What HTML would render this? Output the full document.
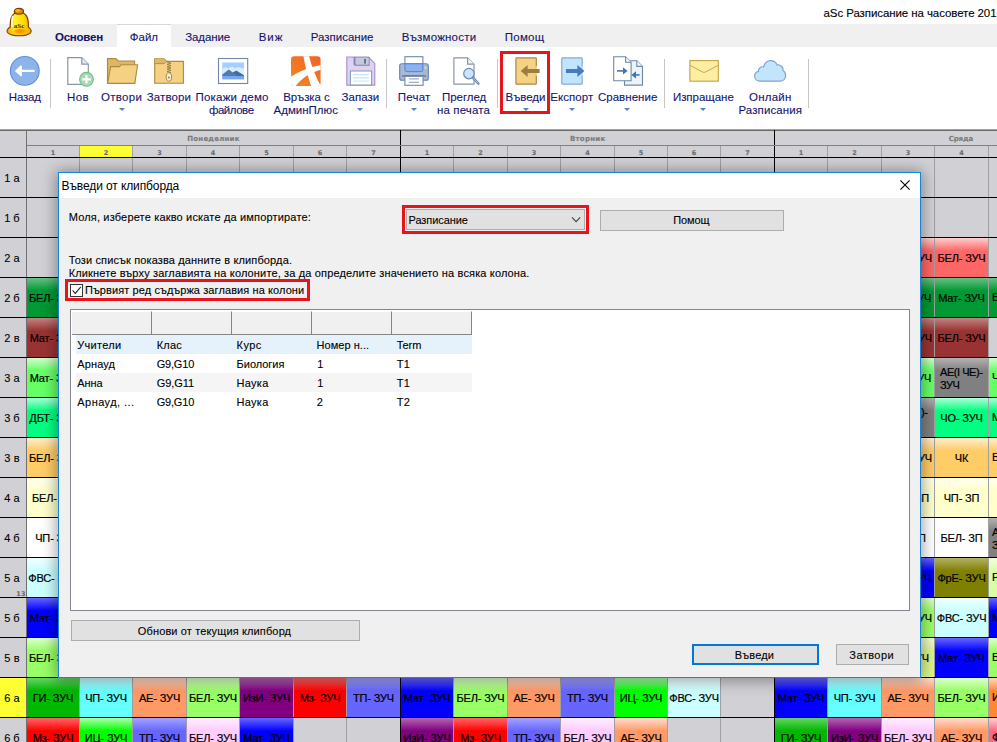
<!DOCTYPE html><html lang='bg'><head><meta charset='utf-8'><title>aSc Разписание на часовете</title><style>
html,body{margin:0;padding:0;}
body{width:997px;height:742px;overflow:hidden;background:#fff;position:relative;font-family:"Liberation Sans",sans-serif;}
.a{position:absolute;}
.t{position:absolute;white-space:nowrap;line-height:1;-webkit-text-stroke:0.1px currentColor;}
.c{-webkit-text-stroke:0.2px currentColor;}
.r{-webkit-text-stroke:0.1px currentColor;}
.cell{position:absolute;height:39px;}
.btn{position:absolute;background:#e1e1e1;border:1px solid #adadad;box-sizing:border-box;}
</style></head><body><div class='a' style='left:0;top:24px;width:997px;height:23px;background:#f0f0f0'></div><div class='a' style='left:117px;top:24px;width:54px;height:23px;background:#fff;border-top:1px solid #d6d6d6;box-sizing:border-box'></div><div class='t r' style='font-size:11.5px;color:#000;letter-spacing:-0.084px;left:823.50px;top:8.15px;'>aSc Разписание на часовете 201</div><div class='t r' style='font-size:11.5px;color:#15156c;font-weight:bold;letter-spacing:-0.240px;left:55.00px;top:32.15px;'>Основен</div><div class='t r' style='font-size:11.5px;color:#15156c;letter-spacing:0.030px;left:129.70px;top:32.15px;'>Файл</div><div class='t r' style='font-size:11.5px;color:#15156c;letter-spacing:-0.132px;left:185.30px;top:32.15px;'>Задание</div><div class='t r' style='font-size:11.5px;color:#15156c;letter-spacing:0.868px;left:258.80px;top:32.15px;'>Виж</div><div class='t r' style='font-size:11.5px;color:#15156c;letter-spacing:0.000px;left:310.70px;top:32.15px;'>Разписание</div><div class='t r' style='font-size:11.5px;color:#15156c;letter-spacing:0.210px;left:401.80px;top:32.15px;'>Възможности</div><div class='t r' style='font-size:11.5px;color:#15156c;letter-spacing:0.252px;left:504.80px;top:32.15px;'>Помощ</div><div class='t r' style='font-size:11.5px;color:#15156c;letter-spacing:-0.211px;left:8.80px;top:92.45px;'>Назад</div><div class='t r' style='font-size:11.5px;color:#15156c;letter-spacing:0.362px;left:67.00px;top:92.45px;'>Нов</div><div class='t r' style='font-size:11.5px;color:#15156c;letter-spacing:0.330px;left:100.90px;top:92.45px;'>Отвори</div><div class='t r' style='font-size:11.5px;color:#15156c;letter-spacing:0.134px;left:146.70px;top:92.45px;'>Затвори</div><div class='t r' style='font-size:11.5px;color:#15156c;letter-spacing:0.176px;left:195.60px;top:92.45px;'>Покажи демо</div><div class='t r' style='font-size:11.5px;color:#15156c;letter-spacing:-0.458px;left:208.90px;top:105.45px;'>файлове</div><div class='t r' style='font-size:11.5px;color:#15156c;letter-spacing:-0.095px;left:283.20px;top:92.45px;'>Връзка с</div><div class='t r' style='font-size:11.5px;color:#15156c;letter-spacing:-0.014px;left:273.60px;top:105.45px;'>АдминПлюс</div><div class='t r' style='font-size:11.5px;color:#15156c;letter-spacing:0.009px;left:341.60px;top:92.45px;'>Запази</div><div class='t r' style='font-size:11.5px;color:#15156c;letter-spacing:0.243px;left:397.70px;top:92.45px;'>Печат</div><div class='t r' style='font-size:11.5px;color:#15156c;letter-spacing:-0.023px;left:441.90px;top:92.45px;'>Преглед</div><div class='t r' style='font-size:11.5px;color:#15156c;letter-spacing:0.149px;left:436.90px;top:105.45px;'>на печата</div><div class='t r' style='font-size:11.5px;color:#15156c;letter-spacing:-0.071px;left:505.60px;top:92.45px;'>Въведи</div><div class='t r' style='font-size:11.5px;color:#15156c;letter-spacing:0.082px;left:550.20px;top:92.45px;'>Експорт</div><div class='t r' style='font-size:11.5px;color:#15156c;letter-spacing:0.042px;left:597.90px;top:92.45px;'>Сравнение</div><div class='t r' style='font-size:11.5px;color:#15156c;letter-spacing:-0.030px;left:672.90px;top:92.45px;'>Изпращане</div><div class='t r' style='font-size:11.5px;color:#15156c;letter-spacing:0.219px;left:749.10px;top:92.45px;'>Онлайн</div><div class='t r' style='font-size:11.5px;color:#15156c;letter-spacing:0.086px;left:738.50px;top:105.45px;'>Разписания</div><div class='a' style='left:50px;top:59px;width:1px;height:49px;background:#c6c6c6'></div><div class='a' style='left:386px;top:59px;width:1px;height:49px;background:#c6c6c6'></div><div class='a' style='left:497px;top:59px;width:1px;height:49px;background:#c6c6c6'></div><div class='a' style='left:664px;top:59px;width:1px;height:49px;background:#c6c6c6'></div><div class='a' style='left:808px;top:59px;width:1px;height:49px;background:#c6c6c6'></div><div class='a' style='left:118.6px;top:108px;width:0;height:0;border-left:3px solid transparent;border-right:3px solid transparent;border-top:3px solid #5a7fb8'></div><div class='a' style='left:357.3px;top:108px;width:0;height:0;border-left:3px solid transparent;border-right:3px solid transparent;border-top:3px solid #5a7fb8'></div><div class='a' style='left:411.2px;top:108px;width:0;height:0;border-left:3px solid transparent;border-right:3px solid transparent;border-top:3px solid #5a7fb8'></div><div class='a' style='left:522.6px;top:108px;width:0;height:0;border-left:3px solid transparent;border-right:3px solid transparent;border-top:3px solid #5a7fb8'></div><div class='a' style='left:568.5px;top:108px;width:0;height:0;border-left:3px solid transparent;border-right:3px solid transparent;border-top:3px solid #5a7fb8'></div><div class='a' style='left:624.4px;top:108px;width:0;height:0;border-left:3px solid transparent;border-right:3px solid transparent;border-top:3px solid #5a7fb8'></div><div class='a' style='left:700.0px;top:108px;width:0;height:0;border-left:3px solid transparent;border-right:3px solid transparent;border-top:3px solid #5a7fb8'></div><div class='a' style='left:500px;top:51px;width:50px;height:63px;border:3px solid #e8141c;box-sizing:border-box'></div><svg class='a' style='left:0;top:0' width='997' height='128' viewBox='0 0 997 128'>
<defs>
<linearGradient id='bellg' x1='0' y1='0' x2='1' y2='0'><stop offset='0' stop-color='#f0b000'/><stop offset='0.3' stop-color='#fff030'/><stop offset='0.65' stop-color='#ffe000'/><stop offset='1' stop-color='#f0a800'/></linearGradient>
<linearGradient id='bellv' x1='0' y1='0' x2='0' y2='1'><stop offset='0.5' stop-color='#ffe020' stop-opacity='0'/><stop offset='1' stop-color='#f09000' stop-opacity='0.45'/></linearGradient>
<linearGradient id='apg' x1='0' y1='1' x2='1' y2='0'><stop offset='0' stop-color='#f58820'/><stop offset='1' stop-color='#ee6428'/></linearGradient>
<clipPath id='apc'><rect x='291' y='56.2' width='29.6' height='29.7' rx='3.2'/></clipPath>
<radialGradient id='bello'><stop offset='0' stop-color='#ff8a00'/><stop offset='0.6' stop-color='#ff9a08' stop-opacity='0.9'/><stop offset='1' stop-color='#ffb010' stop-opacity='0'/></radialGradient>
</defs>
<!-- bell -->
<g>
<path d='M10.2 27 C10 17 12.4 12.4 19.2 12.4 C26 12.4 28.6 17 28.4 27 C29.4 28 30.6 29 31 30.4 C31.6 32.6 29.6 34 26.6 34.8 C22.6 35.8 15.8 35.8 11.8 34.8 C8.8 34 6.6 32.6 7.2 30.4 C7.6 29 9 28 10.2 27 Z' fill='url(#bellg)' stroke='#7a3c00' stroke-width='1.25'/>
<path d='M10.2 27 C10 17 12.4 12.4 19.2 12.4 C26 12.4 28.6 17 28.4 27 C29.4 28 30.6 29 31 30.4 C31.6 32.6 29.6 34 26.6 34.8 C22.6 35.8 15.8 35.8 11.8 34.8 C8.8 34 6.6 32.6 7.2 30.4 C7.6 29 9 28 10.2 27 Z' fill='url(#bellv)'/>
<path d='M12.6 16.5 C11.8 19.5 11.8 23.5 12 26.4' fill='none' stroke='#fffbe0' stroke-width='1.7' stroke-linecap='round' opacity='0.9'/>
<ellipse cx='20.2' cy='31.2' rx='7.6' ry='3.3' fill='url(#bello)'/>
<ellipse cx='18.9' cy='11.2' rx='4.6' ry='2.9' fill='#d88a08' stroke='#7a3c00' stroke-width='1.2'/>
<ellipse cx='17.8' cy='10.6' rx='2.4' ry='1.3' fill='#ffc030' opacity='0.8'/>
<text x='19' y='28' font-family='"Liberation Serif",serif' font-size='7' font-weight='bold' fill='#5a2800' text-anchor='middle'>aSc</text>
</g>
<!-- back -->
<circle cx='24.8' cy='70.9' r='14.4' fill='#8cb4ea' stroke='#5f8fd8' stroke-width='1.1'/>
<path d='M34.6 70.9 H18.5 M21.5 66.2 L16.6 70.9 L21.5 75.6' fill='none' stroke='#fff' stroke-width='2.3' stroke-linejoin='miter'/>
<path d='M15.6 70.9 L21.8 65.4 V76.4 Z' fill='#fff'/>
<!-- new -->
<path d='M67.8 57.7 H81.8 L88.3 64.2 V84.4 H67.8 Z' fill='#fff' stroke='#8796ad' stroke-width='1.2'/>
<path d='M81.8 57.7 V64.2 H88.3' fill='#e4e9f0' stroke='#8796ad' stroke-width='1.2'/>
<circle cx='86.5' cy='79.3' r='6.9' fill='#a8d9b4' stroke='#74bd88' stroke-width='1.1'/>
<path d='M86.5 75 V83.6 M82.2 79.3 H90.8' stroke='#fff' stroke-width='2.2'/>
<!-- open folder -->
<path d='M107.5 58.6 H115.8 L118.2 61 H134.6 V83.4 H107.5 Z' fill='#e0b662' stroke='#ae8942' stroke-width='1.1'/>
<path d='M110.6 66.6 H119.4 L121 64.8 H137.6 L134.8 83.4 H107.6 Z' fill='#f5d183' stroke='#ae8942' stroke-width='1.1'/>
<!-- zip folder -->
<path d='M154.7 58.7 H164 L166.6 61.4 H183.4 V83.2 H154.7 Z' fill='#f5d183' stroke='#ae8942' stroke-width='1.1'/>
<path d='M155.2 59.2 H163.8 L166.2 61.8 L164.4 63.6 H155.2 Z' fill='#e0b662'/><path d='M154.7 63.6 H164.4 L166.6 61.4' fill='none' stroke='#ae8942' stroke-width='0.9'/>
<path d='M167 62 L171 63.2 L167 64.4 L171 65.6 L167 66.8 L171 68 L167 69.2 L171 70.4 L167 71.6 L171 72.6' fill='none' stroke='#8a7040' stroke-width='0.8'/>
<ellipse cx='168.9' cy='77' rx='2.7' ry='4.2' fill='#f6eed6' stroke='#9a8048' stroke-width='0.9'/>
<circle cx='168.9' cy='77.6' r='1' fill='#9a8048'/>
<!-- picture -->
<rect x='218.5' y='58.5' width='29.2' height='25' fill='#fff' stroke='#7088a8' stroke-width='1.1'/>
<rect x='222.3' y='62.5' width='21.7' height='16.8' fill='#a6cfff'/>
<path d='M222.3 69.5 C224 67.4 226.5 67 228.4 68.6 C230 66.6 233.4 66.6 235 68.4 C237 66.6 240.6 66.8 242 68.6 L244 68.2 V76 H222.3 Z' fill='#d6efff'/>
<path d='M222.3 74.4 L228.8 69.6 L232.8 72.6 L236.4 70.8 L244 75.6 V76.4 H222.3 Z' fill='#5379b3'/>
<path d='M232.8 72.6 L236.4 70.8 L244 75.6 V76.4 H238 Z' fill='#456a9f'/>
<rect x='222.3' y='76.2' width='21.7' height='3.1' fill='#79a8f2'/>
<!-- adminplus -->
<rect x='291' y='56.2' width='29.6' height='29.7' rx='3.2' fill='url(#apg)'/>
<g clip-path='url(#apc)'>
<path d='M303.2 55 C305 66 308 77 311.4 87 L321.4 87 C315.6 77 311.4 66 308.8 55 Z' fill='#fff'/>
<path d='M290 77.2 C300 70.6 310.6 66.6 321.6 64.8 L321.6 69.6 C311.6 72 302.6 77 294.6 87 L290 87 Z' fill='#fff'/>
</g>
<!-- floppy -->
<path d='M346.8 57 H368.4 L374.8 63.4 V85.1 H346.8 Z' fill='#dcd2f2' stroke='#a890cc' stroke-width='1.1'/>
<path d='M353.6 57 H369.6 V65.8 H355.2 Q353.6 65.8 353.6 64 Z' fill='#8c7cb0'/>
<rect x='355.4' y='57.4' width='13.4' height='7.4' rx='0.8' fill='#c2cadb'/>
<rect x='364' y='59' width='2' height='4.6' fill='#6a7290'/>
<rect x='350.4' y='71' width='21.2' height='14' fill='#fff' stroke='#8898b4' stroke-width='1'/>
<path d='M353 74.6 H369 M353 77.8 H369 M353 81 H369' stroke='#c6e4f9' stroke-width='1.2'/>
<!-- printer -->
<rect x='404.9' y='56.7' width='18' height='9' fill='#fff' stroke='#7088a8' stroke-width='1.1'/>
<rect x='399.7' y='63.8' width='28.6' height='16.4' rx='2' fill='#a9b9d2' stroke='#6482ac' stroke-width='1.1'/>
<path d='M404.9 63.8 H422.9 V69.8 Q422.9 71.6 421 71.6 H406.8 Q404.9 71.6 404.9 69.8 Z' fill='#8ab2f2' stroke='#5584d6' stroke-width='1'/>
<circle cx='425.6' cy='67.8' r='1.1' fill='#ffe060'/>
<path d='M402.4 77 Q402.4 75.6 404 75.6 H424 Q425.6 75.6 425.6 77' fill='none' stroke='#5f7aa2' stroke-width='1.3'/>
<rect x='404.9' y='76.3' width='18.2' height='9' fill='#fff' stroke='#7088a8' stroke-width='1.1'/>
<path d='M409 78.9 H419 M409 82.3 H419' stroke='#8a9ab6' stroke-width='1'/>
<!-- preview -->
<path d='M453.9 57.8 H467.6 L474 64.2 V84.2 H453.9 Z' fill='#fff' stroke='#8796ad' stroke-width='1.2'/>
<path d='M467.6 57.8 V64.2 H474' fill='#f2f5f9' stroke='#8796ad' stroke-width='1.2'/>
<path d='M472.6 77.4 L478.4 83.6' stroke='#7189ad' stroke-width='2.6' stroke-linecap='round'/>
<path d='M472.6 77.4 L478.2 83.4' stroke='#b8c8dc' stroke-width='0.9' stroke-linecap='round'/>
<circle cx='468.9' cy='73.6' r='5.2' fill='#c9e6fb' stroke='#6a8ab4' stroke-width='1.2'/>
<!-- import -->
<rect x='515.9' y='57.8' width='20.4' height='26.4' rx='0.8' fill='#f5d183' stroke='#a98a4c' stroke-width='1.2'/>
<rect x='535.5' y='66.2' width='1.5' height='9.6' fill='#f5d183'/>
<path d='M539.6 69.1 H527.6 V65 L520.8 71 L527.6 77 V72.9 H539.6 Z' fill='#9b7c42'/>
<!-- export -->
<rect x='561.8' y='57.8' width='20.4' height='26.4' rx='0.8' fill='#c1e5fd' stroke='#8aa9da' stroke-width='1.2'/>
<rect x='581.4' y='66.2' width='1.5' height='9.6' fill='#c1e5fd'/>
<path d='M566 69.1 H577.4 V65 L584.4 71 L577.4 77 V72.9 H566 Z' fill='#4a7abb'/>
<!-- compare -->
<path d='M624.5 60.7 H636.8 L642.5 66.4 V85.1 H624.5 Z' fill='#e9f4fc' stroke='#7088a8' stroke-width='1.1'/>
<path d='M636.8 60.7 V66.4 H642.5' fill='#f4f8fc' stroke='#7088a8' stroke-width='1.1'/>
<path d='M613.7 56.7 H625.6 L631.1 62.2 V80.8 H613.7 Z' fill='#fff' stroke='#7088a8' stroke-width='1.1'/>
<path d='M625.6 56.7 V62.2 H631.1' fill='#eef2f7' stroke='#7088a8' stroke-width='1.1'/>
<path d='M617 70.9 H624' fill='none' stroke='#4272ba' stroke-width='1.6'/><path d='M623 67.2 L627.6 70.9 L623 74.6 Z' fill='#4272ba'/>
<path d='M639.6 74.9 H635' fill='none' stroke='#4272ba' stroke-width='1.6'/><path d='M636 71.2 L631.4 74.9 L636 78.6 Z' fill='#4272ba'/>
<!-- envelope -->
<rect x='689.9' y='60.6' width='28.4' height='20.6' fill='#fdefa2' stroke='#c7a84c' stroke-width='1.2'/>
<path d='M690.2 65.4 L702.6 72 Q704.1 72.8 705.6 72 L718 65.4' fill='none' stroke='#c7a84c' stroke-width='1'/>
<!-- cloud -->
<path d='M760 81.2 C756.6 81.2 754.6 78.8 754.6 76.2 C754.6 73.8 756.2 72 758.4 71.4 C758.4 68.4 760.8 66.4 763.6 66.8 C764.6 63.4 767.2 60.6 770.6 60.6 C773.8 60.6 776.2 62.6 777.2 65 C780.6 64.4 783.4 67.2 783 70.6 C784.8 71.6 785.6 73.6 785.6 75.6 C785.6 78.8 783.4 81.2 780 81.2 Z' fill='#c1e5fd' stroke='#82a3d3' stroke-width='1.2'/>
</svg>
<div class='a' style='left:0;top:129px;width:997px;height:613px;background:#d0d0d5'></div><div class='a' style='left:0;top:129px;width:997px;height:2px;background:linear-gradient(#a4a4a4 50%,#6a6a6a 50%)'></div><div class='a' style='left:26px;top:130px;width:1px;height:612px;background:#707070'></div><div class='a' style='left:79px;top:146px;width:1px;height:596px;background:#a0a0a0'></div><div class='a' style='left:132px;top:146px;width:1px;height:596px;background:#a0a0a0'></div><div class='a' style='left:186px;top:146px;width:1px;height:596px;background:#a0a0a0'></div><div class='a' style='left:239px;top:146px;width:1px;height:596px;background:#a0a0a0'></div><div class='a' style='left:293px;top:146px;width:1px;height:596px;background:#a0a0a0'></div><div class='a' style='left:346px;top:146px;width:1px;height:596px;background:#a0a0a0'></div><div class='a' style='left:400px;top:130px;width:1px;height:612px;background:#000'></div><div class='a' style='left:453px;top:146px;width:1px;height:596px;background:#a0a0a0'></div><div class='a' style='left:507px;top:146px;width:1px;height:596px;background:#a0a0a0'></div><div class='a' style='left:560px;top:146px;width:1px;height:596px;background:#a0a0a0'></div><div class='a' style='left:614px;top:146px;width:1px;height:596px;background:#a0a0a0'></div><div class='a' style='left:667px;top:146px;width:1px;height:596px;background:#a0a0a0'></div><div class='a' style='left:720px;top:146px;width:1px;height:596px;background:#a0a0a0'></div><div class='a' style='left:774px;top:130px;width:1px;height:612px;background:#000'></div><div class='a' style='left:827px;top:146px;width:1px;height:596px;background:#a0a0a0'></div><div class='a' style='left:881px;top:146px;width:1px;height:596px;background:#a0a0a0'></div><div class='a' style='left:934px;top:146px;width:1px;height:596px;background:#a0a0a0'></div><div class='a' style='left:988px;top:146px;width:1px;height:596px;background:#a0a0a0'></div><div class='a' style='left:27px;top:145px;width:970px;height:1px;background:#808080'></div><div class='a' style='left:0;top:157px;width:997px;height:1px;background:#000'></div><div class='a' style='left:80px;top:146px;width:52px;height:11px;background:#ffff33'></div><div class='t ' style='font-size:7px;color:#7a7a7a;font-weight:bold;letter-spacing:0.202px;left:187.30px;top:136.09px;font-family:"DejaVu Sans",sans-serif;'>Понеделник</div><div class='t ' style='font-size:7px;color:#7a7a7a;font-weight:bold;letter-spacing:0.240px;left:570.00px;top:136.09px;font-family:"DejaVu Sans",sans-serif;'>Вторник</div><div class='t ' style='font-size:7px;color:#7a7a7a;font-weight:bold;letter-spacing:-0.146px;left:948.70px;top:136.09px;font-family:"DejaVu Sans",sans-serif;'>Сряда</div><div class='t ' style='font-size:6.5px;color:#6c6c6c;font-weight:bold;top:149.88px;left:43.0px;width:20px;text-align:center;font-family:"DejaVu Sans",sans-serif;'>1</div><div class='t ' style='font-size:6.5px;color:#6c6c6c;font-weight:bold;top:149.88px;left:96.0px;width:20px;text-align:center;font-family:"DejaVu Sans",sans-serif;'>2</div><div class='t ' style='font-size:6.5px;color:#6c6c6c;font-weight:bold;top:149.88px;left:149.5px;width:20px;text-align:center;font-family:"DejaVu Sans",sans-serif;'>3</div><div class='t ' style='font-size:6.5px;color:#6c6c6c;font-weight:bold;top:149.88px;left:203.0px;width:20px;text-align:center;font-family:"DejaVu Sans",sans-serif;'>4</div><div class='t ' style='font-size:6.5px;color:#6c6c6c;font-weight:bold;top:149.88px;left:256.5px;width:20px;text-align:center;font-family:"DejaVu Sans",sans-serif;'>5</div><div class='t ' style='font-size:6.5px;color:#6c6c6c;font-weight:bold;top:149.88px;left:310.0px;width:20px;text-align:center;font-family:"DejaVu Sans",sans-serif;'>6</div><div class='t ' style='font-size:6.5px;color:#6c6c6c;font-weight:bold;top:149.88px;left:363.5px;width:20px;text-align:center;font-family:"DejaVu Sans",sans-serif;'>7</div><div class='t ' style='font-size:6.5px;color:#6c6c6c;font-weight:bold;top:149.88px;left:417.0px;width:20px;text-align:center;font-family:"DejaVu Sans",sans-serif;'>1</div><div class='t ' style='font-size:6.5px;color:#6c6c6c;font-weight:bold;top:149.88px;left:470.5px;width:20px;text-align:center;font-family:"DejaVu Sans",sans-serif;'>2</div><div class='t ' style='font-size:6.5px;color:#6c6c6c;font-weight:bold;top:149.88px;left:524.0px;width:20px;text-align:center;font-family:"DejaVu Sans",sans-serif;'>3</div><div class='t ' style='font-size:6.5px;color:#6c6c6c;font-weight:bold;top:149.88px;left:577.5px;width:20px;text-align:center;font-family:"DejaVu Sans",sans-serif;'>4</div><div class='t ' style='font-size:6.5px;color:#6c6c6c;font-weight:bold;top:149.88px;left:631.0px;width:20px;text-align:center;font-family:"DejaVu Sans",sans-serif;'>5</div><div class='t ' style='font-size:6.5px;color:#6c6c6c;font-weight:bold;top:149.88px;left:684.0px;width:20px;text-align:center;font-family:"DejaVu Sans",sans-serif;'>6</div><div class='t ' style='font-size:6.5px;color:#6c6c6c;font-weight:bold;top:149.88px;left:737.5px;width:20px;text-align:center;font-family:"DejaVu Sans",sans-serif;'>7</div><div class='t ' style='font-size:6.5px;color:#6c6c6c;font-weight:bold;top:149.88px;left:791.0px;width:20px;text-align:center;font-family:"DejaVu Sans",sans-serif;'>1</div><div class='t ' style='font-size:6.5px;color:#6c6c6c;font-weight:bold;top:149.88px;left:844.5px;width:20px;text-align:center;font-family:"DejaVu Sans",sans-serif;'>2</div><div class='t ' style='font-size:6.5px;color:#6c6c6c;font-weight:bold;top:149.88px;left:898.0px;width:20px;text-align:center;font-family:"DejaVu Sans",sans-serif;'>3</div><div class='t ' style='font-size:6.5px;color:#6c6c6c;font-weight:bold;top:149.88px;left:951.5px;width:20px;text-align:center;font-family:"DejaVu Sans",sans-serif;'>4</div><div class='t ' style='font-size:6.5px;color:#6c6c6c;font-weight:bold;top:149.88px;left:1005.0px;width:20px;text-align:center;font-family:"DejaVu Sans",sans-serif;'>5</div><div class='t ' style='font-size:11px;color:#000;letter-spacing:0.001px;left:4.30px;top:172.94px;'>1 а</div><div class='a' style='left:0;top:197px;width:997px;height:1px;background:#000'></div><div class='t ' style='font-size:11px;color:#000;letter-spacing:-0.061px;left:4.30px;top:212.94px;'>1 б</div><div class='a' style='left:0;top:237px;width:997px;height:1px;background:#000'></div><div class='t ' style='font-size:11px;color:#000;letter-spacing:0.001px;left:4.30px;top:252.94px;'>2 а</div><div class='a' style='left:0;top:277px;width:997px;height:1px;background:#000'></div><div class='t ' style='font-size:11px;color:#000;letter-spacing:-0.061px;left:4.30px;top:292.94px;'>2 б</div><div class='a' style='left:0;top:317px;width:997px;height:1px;background:#000'></div><div class='t ' style='font-size:11px;color:#000;letter-spacing:0.090px;left:4.30px;top:332.94px;'>2 в</div><div class='a' style='left:0;top:357px;width:997px;height:1px;background:#000'></div><div class='t ' style='font-size:11px;color:#000;letter-spacing:0.001px;left:4.30px;top:372.94px;'>3 а</div><div class='a' style='left:0;top:397px;width:997px;height:1px;background:#000'></div><div class='t ' style='font-size:11px;color:#000;letter-spacing:-0.061px;left:4.30px;top:412.94px;'>3 б</div><div class='a' style='left:0;top:437px;width:997px;height:1px;background:#000'></div><div class='t ' style='font-size:11px;color:#000;letter-spacing:0.090px;left:4.30px;top:452.94px;'>3 в</div><div class='a' style='left:0;top:477px;width:997px;height:1px;background:#000'></div><div class='t ' style='font-size:11px;color:#000;letter-spacing:0.001px;left:4.30px;top:492.94px;'>4 а</div><div class='a' style='left:0;top:517px;width:997px;height:1px;background:#000'></div><div class='t ' style='font-size:11px;color:#000;letter-spacing:-0.061px;left:4.30px;top:532.94px;'>4 б</div><div class='a' style='left:0;top:557px;width:997px;height:1px;background:#000'></div><div class='t ' style='font-size:11px;color:#000;letter-spacing:0.001px;left:4.30px;top:572.94px;'>5 а</div><div class='a' style='left:0;top:597px;width:997px;height:1px;background:#000'></div><div class='t ' style='font-size:11px;color:#000;letter-spacing:-0.061px;left:4.30px;top:612.94px;'>5 б</div><div class='a' style='left:0;top:637px;width:997px;height:1px;background:#000'></div><div class='t ' style='font-size:11px;color:#000;letter-spacing:0.090px;left:4.30px;top:652.94px;'>5 в</div><div class='a' style='left:0;top:677px;width:997px;height:1px;background:#000'></div><div class='a' style='left:0;top:678px;width:26px;height:39px;background:#ffff33'></div><div class='t ' style='font-size:11px;color:#000;letter-spacing:0.001px;left:4.30px;top:692.94px;'>6 а</div><div class='a' style='left:0;top:717px;width:997px;height:1px;background:#000'></div><div class='t ' style='font-size:11px;color:#000;letter-spacing:-0.061px;left:4.30px;top:732.94px;'>6 б</div><div class='a' style='left:0;top:757px;width:997px;height:1px;background:#000'></div><div class='t ' style='font-size:6.5px;color:#6c6c6c;font-weight:bold;letter-spacing:0.127px;left:16.30px;top:590.88px;font-family:"DejaVu Sans",sans-serif;'>13</div><div class='cell' style='left:27px;top:278px;width:52px;background:linear-gradient(#66c184,#009933 13px)'></div><div class='t c' style='font-size:11px;color:#000;top:292.94px;left:27px;width:52px;text-align:center;letter-spacing:-0.15px;'>БЕЛ- ЗУЧ</div><div class='cell' style='left:27px;top:318px;width:52px;background:linear-gradient(#c18484,#993333 13px)'></div><div class='t c' style='font-size:11px;color:#000;top:332.94px;left:27px;width:52px;text-align:center;letter-spacing:-0.15px;'>Мат- ЗУЧ</div><div class='cell' style='left:27px;top:358px;width:52px;background:linear-gradient(#ceffce,#66ff66 13px)'></div><div class='t c' style='font-size:11px;color:#000;top:372.94px;left:27px;width:52px;text-align:center;letter-spacing:-0.15px;'>Мат- ЗУЧ</div><div class='cell' style='left:27px;top:398px;width:52px;background:linear-gradient(#adffd6,#00ff80 13px)'></div><div class='t c' style='font-size:11px;color:#000;top:412.94px;left:27px;width:52px;text-align:center;letter-spacing:-0.15px;'>ДБТ- ЗУЧ</div><div class='cell' style='left:27px;top:438px;width:52px;background:linear-gradient(#ffeece,#ffcc66 13px)'></div><div class='t c' style='font-size:11px;color:#000;top:452.94px;left:27px;width:52px;text-align:center;letter-spacing:-0.15px;'>БЕЛ- ЗУЧ</div><div class='cell' style='left:27px;top:478px;width:52px;background:linear-gradient(#ffffee,#ffffcc 13px)'></div><div class='t c' style='font-size:11px;color:#000;top:492.94px;left:27px;width:52px;text-align:center;letter-spacing:-0.15px;'>БЕЛ- ЗП</div><div class='cell' style='left:27px;top:518px;width:52px;background:linear-gradient(#ffffff,#ffffff 13px)'></div><div class='t c' style='font-size:11px;color:#000;top:532.94px;left:27px;width:52px;text-align:center;letter-spacing:-0.15px;'>ЧП- ЗП</div><div class='cell' style='left:27px;top:558px;width:52px;background:linear-gradient(#eeffff,#ccffff 13px)'></div><div class='t c' style='font-size:11px;color:#000;top:572.94px;left:27px;width:52px;text-align:center;letter-spacing:-0.15px;'>ФВС- ЗУЧ</div><div class='cell' style='left:27px;top:598px;width:52px;background:linear-gradient(#6666ff,#0000ff 13px)'></div><div class='t c' style='font-size:11px;color:#000;top:612.94px;left:27px;width:52px;text-align:center;letter-spacing:-0.15px;'>Мат- ЗУЧ</div><div class='cell' style='left:27px;top:638px;width:52px;background:linear-gradient(#deffce,#99ff66 13px)'></div><div class='t c' style='font-size:11px;color:#000;top:652.94px;left:27px;width:52px;text-align:center;letter-spacing:-0.15px;'>БЕЛ- ЗУЧ</div><div class='cell' style='left:882px;top:238px;width:52px;background:linear-gradient(#ffcece,#ff6666 13px)'></div><div class='t c' style='font-size:11px;color:#000;top:252.94px;left:882px;width:52px;text-align:center;letter-spacing:-0.15px;'>БЕЛ- ЗУЧ</div><div class='cell' style='left:882px;top:278px;width:52px;background:linear-gradient(#66c184,#009933 13px)'></div><div class='t c' style='font-size:11px;color:#000;top:292.94px;left:882px;width:52px;text-align:center;letter-spacing:-0.15px;'>Мат- ЗУЧ</div><div class='cell' style='left:882px;top:318px;width:52px;background:linear-gradient(#c18484,#993333 13px)'></div><div class='t c' style='font-size:11px;color:#000;top:332.94px;left:882px;width:52px;text-align:center;letter-spacing:-0.15px;'>БЕЛ- ЗУЧ</div><div class='cell' style='left:882px;top:358px;width:52px;background:linear-gradient(#ceffce,#66ff66 13px)'></div><div class='t c' style='font-size:11px;color:#000;top:372.94px;left:882px;width:52px;text-align:center;letter-spacing:-0.15px;'>Мат- ЗУЧ</div><div class='cell' style='left:882px;top:398px;width:52px;background:linear-gradient(#b2b2b2,#808080 13px)'></div><div class='cell' style='left:882px;top:438px;width:52px;background:linear-gradient(#ffeece,#ffcc66 13px)'></div><div class='t c' style='font-size:11px;color:#000;top:452.94px;left:882px;width:52px;text-align:center;letter-spacing:-0.15px;'>БЕЛ- ЗУЧ</div><div class='cell' style='left:882px;top:478px;width:52px;background:linear-gradient(#ffffee,#ffffcc 13px)'></div><div class='t c' style='font-size:11px;color:#000;top:492.94px;left:882px;width:52px;text-align:center;letter-spacing:-0.15px;'>БЕЛ- ЗП</div><div class='cell' style='left:882px;top:518px;width:52px;background:linear-gradient(#ffffff,#ffffff 13px)'></div><div class='t c' style='font-size:11px;color:#000;top:532.94px;left:882px;width:52px;text-align:center;letter-spacing:-0.15px;'>ЧП- ЗП</div><div class='cell' style='left:882px;top:558px;width:52px;background:linear-gradient(#6666ff,#0000ff 13px)'></div><div class='t c' style='font-size:11px;color:#000;top:572.94px;left:882px;width:52px;text-align:center;letter-spacing:-0.15px;'>Мат- ЗУЧ</div><div class='cell' style='left:882px;top:598px;width:52px;background:linear-gradient(#deffce,#99ff66 13px)'></div><div class='t c' style='font-size:11px;color:#000;top:612.94px;left:882px;width:52px;text-align:center;letter-spacing:-0.15px;'>БЕЛ- ЗУЧ</div><div class='cell' style='left:882px;top:638px;width:52px;background:linear-gradient(#f3fbda,#dcf58e 13px)'></div><div class='t c' style='font-size:11px;color:#000;top:652.94px;left:882px;width:52px;text-align:center;letter-spacing:-0.15px;'>ЧП- ЗУЧ</div><div class='cell' style='left:935px;top:238px;width:53px;background:linear-gradient(#ffcece,#ff6666 13px)'></div><div class='t c' style='font-size:11px;color:#000;top:252.94px;left:935px;width:53px;text-align:center;letter-spacing:-0.15px;'>БЕЛ- ЗУЧ</div><div class='cell' style='left:935px;top:278px;width:53px;background:linear-gradient(#66c184,#009933 13px)'></div><div class='t c' style='font-size:11px;color:#000;top:292.94px;left:935px;width:53px;text-align:center;letter-spacing:-0.15px;'>Мат- ЗУЧ</div><div class='cell' style='left:935px;top:318px;width:53px;background:linear-gradient(#c18484,#993333 13px)'></div><div class='t c' style='font-size:11px;color:#000;top:332.94px;left:935px;width:53px;text-align:center;letter-spacing:-0.15px;'>БЕЛ- ЗУЧ</div><div class='cell' style='left:935px;top:358px;width:53px;background:linear-gradient(#b2b2b2,#808080 13px)'></div><div class='cell' style='left:935px;top:398px;width:53px;background:linear-gradient(#adffd6,#00ff80 13px)'></div><div class='t c' style='font-size:11px;color:#000;top:412.94px;left:935px;width:53px;text-align:center;letter-spacing:-0.15px;'>ЧО- ЗУЧ</div><div class='cell' style='left:935px;top:438px;width:53px;background:linear-gradient(#ffeece,#ffcc66 13px)'></div><div class='t c' style='font-size:11px;color:#000;top:452.94px;left:935px;width:53px;text-align:center;letter-spacing:-0.15px;'>ЧК</div><div class='cell' style='left:935px;top:478px;width:53px;background:linear-gradient(#ffffee,#ffffcc 13px)'></div><div class='t c' style='font-size:11px;color:#000;top:492.94px;left:935px;width:53px;text-align:center;letter-spacing:-0.15px;'>ЧП- ЗП</div><div class='cell' style='left:935px;top:518px;width:53px;background:linear-gradient(#ffffff,#ffffff 13px)'></div><div class='t c' style='font-size:11px;color:#000;top:532.94px;left:935px;width:53px;text-align:center;letter-spacing:-0.15px;'>БЕЛ- ЗП</div><div class='cell' style='left:935px;top:558px;width:53px;background:linear-gradient(#b2b266,#808000 13px)'></div><div class='t c' style='font-size:11px;color:#000;top:572.94px;left:935px;width:53px;text-align:center;letter-spacing:-0.15px;'>ФрЕ- ЗУЧ</div><div class='cell' style='left:935px;top:598px;width:53px;background:linear-gradient(#eeffff,#ccffff 13px)'></div><div class='t c' style='font-size:11px;color:#000;top:612.94px;left:935px;width:53px;text-align:center;letter-spacing:-0.15px;'>ФВС- ЗУЧ</div><div class='cell' style='left:935px;top:638px;width:53px;background:linear-gradient(#6666ff,#0000ff 13px)'></div><div class='t c' style='font-size:11px;color:#000;top:652.94px;left:935px;width:53px;text-align:center;letter-spacing:-0.15px;'>Мат- ЗУЧ</div><div class='t c' style='left:885px;top:406px;font-size:11px;line-height:13px;white-space:normal;width:50px;letter-spacing:-0.45px'>АЕ(I ЧЕ)-<br>ЗУЧ</div><div class='t c' style='left:940px;top:366px;font-size:11px;line-height:13px;white-space:normal;width:50px;letter-spacing:-0.45px'>АЕ(I ЧЕ)-<br>ЗУЧ</div><div class='cell' style='left:989px;top:278px;width:8px;background:linear-gradient(#66c184,#009933 13px)'></div><div class='t c' style='left:992px;top:292px;font-size:11px'>БЕЛ- ЗУЧ</div><div class='cell' style='left:989px;top:358px;width:8px;background:linear-gradient(#ceffce,#66ff66 13px)'></div><div class='t c' style='left:992px;top:372px;font-size:11px'>ЧП- ЗУЧ</div><div class='cell' style='left:989px;top:398px;width:8px;background:linear-gradient(#adffd6,#00ff80 13px)'></div><div class='t c' style='left:992px;top:412px;font-size:11px'>Мат- ЗУЧ</div><div class='cell' style='left:989px;top:438px;width:8px;background:linear-gradient(#ffeece,#ffcc66 13px)'></div><div class='t c' style='left:992px;top:452px;font-size:11px'>БЕЛ- ЗУЧ</div><div class='cell' style='left:989px;top:478px;width:8px;background:linear-gradient(#ffffee,#ffffcc 13px)'></div><div class='cell' style='left:989px;top:518px;width:8px;background:linear-gradient(#b2b2b2,#808080 13px)'></div><div class='cell' style='left:989px;top:558px;width:8px;background:linear-gradient(#f2ffe2,#d9ffa6 13px)'></div><div class='t c' style='left:992px;top:572px;font-size:11px'>РЕ- ЗУЧ</div><div class='cell' style='left:989px;top:598px;width:8px;background:linear-gradient(#6666ff,#0000ff 13px)'></div><div class='t c' style='left:992px;top:612px;font-size:11px'>Мат- ЗУЧ</div><div class='cell' style='left:989px;top:638px;width:8px;background:linear-gradient(#deffce,#99ff66 13px)'></div><div class='t c' style='left:992px;top:652px;font-size:11px'>БЕЛ- ЗУЧ</div><div class='t c' style='left:992px;top:526px;font-size:11px;line-height:13px'>А<br>З</div><div class='cell' style='left:27px;top:678px;width:52px;background:linear-gradient(#66d466,#00b800 13px)'></div><div class='t c' style='font-size:11px;color:#000;top:692.94px;left:27px;width:52px;text-align:center;letter-spacing:-0.15px;'>ГИ- ЗУЧ</div><div class='cell' style='left:80px;top:678px;width:52px;background:linear-gradient(#ceffff,#66ffff 13px)'></div><div class='t c' style='font-size:11px;color:#000;top:692.94px;left:80px;width:52px;text-align:center;letter-spacing:-0.15px;'>ЧП- ЗУЧ</div><div class='cell' style='left:133px;top:678px;width:53px;background:linear-gradient(#ffdece,#ff9966 13px)'></div><div class='t c' style='font-size:11px;color:#000;top:692.94px;left:133px;width:53px;text-align:center;letter-spacing:-0.15px;'>АЕ- ЗУЧ</div><div class='cell' style='left:187px;top:678px;width:52px;background:linear-gradient(#deffce,#99ff66 13px)'></div><div class='t c' style='font-size:11px;color:#000;top:692.94px;left:187px;width:52px;text-align:center;letter-spacing:-0.15px;'>БЕЛ- ЗУЧ</div><div class='cell' style='left:240px;top:678px;width:53px;background:linear-gradient(#b266b2,#800080 13px)'></div><div class='t c' style='font-size:11px;color:#000;top:692.94px;left:240px;width:53px;text-align:center;letter-spacing:-0.15px;'>ИзИ- ЗУЧ</div><div class='cell' style='left:294px;top:678px;width:52px;background:linear-gradient(#ff6666,#ff0000 13px)'></div><div class='t c' style='font-size:11px;color:#000;top:692.94px;left:294px;width:52px;text-align:center;letter-spacing:-0.15px;'>Мз- ЗУЧ</div><div class='cell' style='left:347px;top:678px;width:53px;background:linear-gradient(#a3a3ff,#6666ff 13px)'></div><div class='t c' style='font-size:11px;color:#000;top:692.94px;left:347px;width:53px;text-align:center;letter-spacing:-0.15px;'>ТП- ЗУЧ</div><div class='cell' style='left:401px;top:678px;width:52px;background:linear-gradient(#6666ff,#0000ff 13px)'></div><div class='t c' style='font-size:11px;color:#000;top:692.94px;left:401px;width:52px;text-align:center;letter-spacing:-0.15px;'>Мат- ЗУЧ</div><div class='cell' style='left:454px;top:678px;width:53px;background:linear-gradient(#deffce,#99ff66 13px)'></div><div class='t c' style='font-size:11px;color:#000;top:692.94px;left:454px;width:53px;text-align:center;letter-spacing:-0.15px;'>БЕЛ- ЗУЧ</div><div class='cell' style='left:508px;top:678px;width:52px;background:linear-gradient(#ffdece,#ff9966 13px)'></div><div class='t c' style='font-size:11px;color:#000;top:692.94px;left:508px;width:52px;text-align:center;letter-spacing:-0.15px;'>АЕ- ЗУЧ</div><div class='cell' style='left:561px;top:678px;width:53px;background:linear-gradient(#a3a3ff,#6666ff 13px)'></div><div class='t c' style='font-size:11px;color:#000;top:692.94px;left:561px;width:53px;text-align:center;letter-spacing:-0.15px;'>ТП- ЗУЧ</div><div class='cell' style='left:615px;top:678px;width:52px;background:linear-gradient(#adffad,#00ff00 13px)'></div><div class='t c' style='font-size:11px;color:#000;top:692.94px;left:615px;width:52px;text-align:center;letter-spacing:-0.15px;'>ИЦ- ЗУЧ</div><div class='cell' style='left:668px;top:678px;width:52px;background:linear-gradient(#eeffff,#ccffff 13px)'></div><div class='t c' style='font-size:11px;color:#000;top:692.94px;left:668px;width:52px;text-align:center;letter-spacing:-0.15px;'>ФВС- ЗУЧ</div><div class='cell' style='left:775px;top:678px;width:52px;background:linear-gradient(#6666ff,#0000ff 13px)'></div><div class='t c' style='font-size:11px;color:#000;top:692.94px;left:775px;width:52px;text-align:center;letter-spacing:-0.15px;'>Мат- ЗУЧ</div><div class='cell' style='left:828px;top:678px;width:53px;background:linear-gradient(#ceffff,#66ffff 13px)'></div><div class='t c' style='font-size:11px;color:#000;top:692.94px;left:828px;width:53px;text-align:center;letter-spacing:-0.15px;'>ЧП- ЗУЧ</div><div class='cell' style='left:882px;top:678px;width:52px;background:linear-gradient(#ffdece,#ff9966 13px)'></div><div class='t c' style='font-size:11px;color:#000;top:692.94px;left:882px;width:52px;text-align:center;letter-spacing:-0.15px;'>АЕ- ЗУЧ</div><div class='cell' style='left:935px;top:678px;width:53px;background:linear-gradient(#deffce,#99ff66 13px)'></div><div class='t c' style='font-size:11px;color:#000;top:692.94px;left:935px;width:53px;text-align:center;letter-spacing:-0.15px;'>БЕЛ- ЗУЧ</div><div class='cell' style='left:989px;top:678px;width:8px;background:linear-gradient(#ffd8bd,#ff8833 13px)'></div><div class='t c' style='left:992px;top:692px;font-size:11px'>ИЦ- ЗУЧ</div><div class='cell' style='left:27px;top:718px;width:52px;background:linear-gradient(#ff6666,#ff0000 13px)'></div><div class='t c' style='font-size:11px;color:#000;top:732.94px;left:27px;width:52px;text-align:center;letter-spacing:-0.15px;'>Мз- ЗУЧ</div><div class='cell' style='left:80px;top:718px;width:52px;background:linear-gradient(#adffad,#00ff00 13px)'></div><div class='t c' style='font-size:11px;color:#000;top:732.94px;left:80px;width:52px;text-align:center;letter-spacing:-0.15px;'>ИЦ- ЗУЧ</div><div class='cell' style='left:133px;top:718px;width:53px;background:linear-gradient(#a3a3ff,#6666ff 13px)'></div><div class='t c' style='font-size:11px;color:#000;top:732.94px;left:133px;width:53px;text-align:center;letter-spacing:-0.15px;'>ТП- ЗУЧ</div><div class='cell' style='left:187px;top:718px;width:52px;background:linear-gradient(#ffeeff,#ffccff 13px)'></div><div class='t c' style='font-size:11px;color:#000;top:732.94px;left:187px;width:52px;text-align:center;letter-spacing:-0.15px;'>БЕЛ- ЗУЧ</div><div class='cell' style='left:240px;top:718px;width:53px;background:linear-gradient(#6666ff,#0000ff 13px)'></div><div class='t c' style='font-size:11px;color:#000;top:732.94px;left:240px;width:53px;text-align:center;letter-spacing:-0.15px;'>Мат- ЗУЧ</div><div class='cell' style='left:401px;top:718px;width:52px;background:linear-gradient(#b266b2,#800080 13px)'></div><div class='t c' style='font-size:11px;color:#000;top:732.94px;left:401px;width:52px;text-align:center;letter-spacing:-0.15px;'>ИзИ- ЗУЧ</div><div class='cell' style='left:454px;top:718px;width:53px;background:linear-gradient(#ff6666,#ff0000 13px)'></div><div class='t c' style='font-size:11px;color:#000;top:732.94px;left:454px;width:53px;text-align:center;letter-spacing:-0.15px;'>Мз- ЗУЧ</div><div class='cell' style='left:508px;top:718px;width:52px;background:linear-gradient(#a3a3ff,#6666ff 13px)'></div><div class='t c' style='font-size:11px;color:#000;top:732.94px;left:508px;width:52px;text-align:center;letter-spacing:-0.15px;'>ТП- ЗУЧ</div><div class='cell' style='left:561px;top:718px;width:53px;background:linear-gradient(#ffeeff,#ffccff 13px)'></div><div class='t c' style='font-size:11px;color:#000;top:732.94px;left:561px;width:53px;text-align:center;letter-spacing:-0.15px;'>БЕЛ- ЗУЧ</div><div class='cell' style='left:615px;top:718px;width:52px;background:linear-gradient(#ffdece,#ff9966 13px)'></div><div class='t c' style='font-size:11px;color:#000;top:732.94px;left:615px;width:52px;text-align:center;letter-spacing:-0.15px;'>АЕ- ЗУЧ</div><div class='cell' style='left:775px;top:718px;width:52px;background:linear-gradient(#66d466,#00b800 13px)'></div><div class='t c' style='font-size:11px;color:#000;top:732.94px;left:775px;width:52px;text-align:center;letter-spacing:-0.15px;'>ГИ- ЗУЧ</div><div class='cell' style='left:828px;top:718px;width:53px;background:linear-gradient(#b266b2,#800080 13px)'></div><div class='t c' style='font-size:11px;color:#000;top:732.94px;left:828px;width:53px;text-align:center;letter-spacing:-0.15px;'>ИзИ- ЗУЧ</div><div class='cell' style='left:882px;top:718px;width:52px;background:linear-gradient(#ffeeff,#ffccff 13px)'></div><div class='t c' style='font-size:11px;color:#000;top:732.94px;left:882px;width:52px;text-align:center;letter-spacing:-0.15px;'>БЕЛ- ЗУЧ</div><div class='cell' style='left:935px;top:718px;width:53px;background:linear-gradient(#ffdece,#ff9966 13px)'></div><div class='t c' style='font-size:11px;color:#000;top:732.94px;left:935px;width:53px;text-align:center;letter-spacing:-0.15px;'>АЕ- ЗУЧ</div><div class='cell' style='left:989px;top:718px;width:8px;background:linear-gradient(#ffced6,#ff6680 13px)'></div><div class='t c' style='left:992px;top:732px;font-size:11px'>ФВС- ЗУЧ</div><div class='a' style='left:58px;top:172px;width:863px;height:506px;box-sizing:border-box;border:1px solid #1883d7;background:#f0f0f0;box-shadow:0 1px 14px 2px rgba(0,0,0,0.36)'></div><div class='a' style='left:59px;top:173px;width:861px;height:25px;background:#fff'></div><div class='t ' style='font-size:12px;color:#000;letter-spacing:-0.103px;left:61.50px;top:179.96px;-webkit-text-stroke:0;'>Въведи от клипборда</div><svg class='a' style='left:899px;top:179px' width='12' height='12' viewBox='0 0 12 12'><path d='M1.4 1.4 L10.6 10.6 M10.6 1.4 L1.4 10.6' stroke='#000' stroke-width='1.1' fill='none'/></svg><div class='t ' style='font-size:11px;color:#000;letter-spacing:0.169px;left:68.70px;top:212.24px;'>Моля, изберете какво искате да импортирате:</div><div class='t ' style='font-size:11px;color:#000;letter-spacing:0.131px;left:68.70px;top:254.94px;'>Този списък показва данните в клипборда.</div><div class='t ' style='font-size:11px;color:#000;letter-spacing:0.147px;left:68.70px;top:267.74px;'>Кликнете върху заглавията на колоните, за да определите значението на всяка колона.</div><div class='a' style='left:402px;top:205px;width:187px;height:29px;border:3px solid #e8141c;box-sizing:border-box'></div><div class='btn' style='left:406px;top:209px;width:179px;height:21px'></div><div class='t ' style='font-size:11px;color:#000;letter-spacing:-0.078px;left:408.50px;top:214.64px;'>Разписание</div><svg class='a' style='left:570px;top:216px' width='12' height='8' viewBox='0 0 12 8'><path d='M2 1.4 L6.1 5.6 L10.2 1.4' stroke='#444' stroke-width='1.1' fill='none'/></svg><div class='btn' style='left:600px;top:210px;width:184px;height:21px'></div><div class='t ' style='font-size:11px;color:#000;letter-spacing:-0.133px;left:673.30px;top:215.04px;'>Помощ</div><div class='a' style='left:65px;top:279px;width:245px;height:22px;border:3px solid #e8141c;box-sizing:border-box'></div><div class='a' style='left:70px;top:284px;width:13px;height:13px;border:1px solid #333;background:#fff;box-sizing:border-box'></div><svg class='a' style='left:70px;top:284px' width='13' height='13' viewBox='0 0 13 13'><path d='M2.6 6.4 L5.3 9.4 L10.8 2.8' stroke='#222' stroke-width='1.05' fill='none'/></svg><div class='t ' style='font-size:11px;color:#000;letter-spacing:0.092px;left:84.90px;top:285.04px;'>Първият ред съдържа заглавия на колони</div><div class='a' style='left:70px;top:309px;width:840px;height:302px;border:1px solid #828790;background:#fff;box-sizing:border-box'></div><div class='a' style='left:72px;top:311px;width:79px;height:22px;background:#f0f0f0;border-top:1px solid #fff;border-right:1px solid #858585;border-bottom:1px solid #858585'></div><div class='a' style='left:152px;top:311px;width:79px;height:22px;background:#f0f0f0;border-top:1px solid #fff;border-right:1px solid #858585;border-bottom:1px solid #858585'></div><div class='a' style='left:232px;top:311px;width:79px;height:22px;background:#f0f0f0;border-top:1px solid #fff;border-right:1px solid #858585;border-bottom:1px solid #858585'></div><div class='a' style='left:312px;top:311px;width:79px;height:22px;background:#f0f0f0;border-top:1px solid #fff;border-right:1px solid #858585;border-bottom:1px solid #858585'></div><div class='a' style='left:392px;top:311px;width:79px;height:22px;background:#f0f0f0;border-top:1px solid #fff;border-right:1px solid #858585;border-bottom:1px solid #858585'></div><div class='a' style='left:76px;top:335px;width:396px;height:19px;background:#e5f1fb'></div><div class='a' style='left:76px;top:373px;width:396px;height:19px;background:#f5f5f5'></div><div class='t ' style='font-size:11px;color:#000;letter-spacing:0.301px;left:77.30px;top:339.74px;'>Учители</div><div class='t ' style='font-size:11px;color:#000;letter-spacing:0.187px;left:156.70px;top:339.74px;'>Клас</div><div class='t ' style='font-size:11px;color:#000;letter-spacing:0.448px;left:236.60px;top:339.74px;'>Курс</div><div class='t ' style='font-size:11px;color:#000;letter-spacing:0.053px;left:316.50px;top:339.74px;'>Номер н...</div><div class='t ' style='font-size:11px;color:#000;letter-spacing:0.087px;left:396.80px;top:339.74px;'>Term</div><div class='t ' style='font-size:11px;color:#000;letter-spacing:0.120px;left:77.30px;top:358.64px;'>Арнауд</div><div class='t ' style='font-size:11px;color:#000;letter-spacing:-0.189px;left:156.70px;top:358.64px;'>G9,G10</div><div class='t ' style='font-size:11px;color:#000;letter-spacing:-0.027px;left:236.60px;top:358.64px;'>Биология</div><div class='t ' style='font-size:11px;color:#000;letter-spacing:-0.325px;left:317.30px;top:358.64px;'>1</div><div class='t ' style='font-size:11px;color:#000;letter-spacing:0.328px;left:396.80px;top:358.64px;'>T1</div><div class='t ' style='font-size:11px;color:#000;letter-spacing:-0.077px;left:77.30px;top:377.84px;'>Анна</div><div class='t ' style='font-size:11px;color:#000;letter-spacing:-0.053px;left:156.70px;top:377.84px;'>G9,G11</div><div class='t ' style='font-size:11px;color:#000;letter-spacing:0.275px;left:236.60px;top:377.84px;'>Наука</div><div class='t ' style='font-size:11px;color:#000;letter-spacing:-0.325px;left:317.30px;top:377.84px;'>1</div><div class='t ' style='font-size:11px;color:#000;letter-spacing:0.328px;left:396.80px;top:377.84px;'>T1</div><div class='t ' style='font-size:11px;color:#000;letter-spacing:0.449px;left:77.30px;top:396.84px;'>Арнауд, ...</div><div class='t ' style='font-size:11px;color:#000;letter-spacing:-0.189px;left:156.70px;top:396.84px;'>G9,G10</div><div class='t ' style='font-size:11px;color:#000;letter-spacing:0.275px;left:236.60px;top:396.84px;'>Наука</div><div class='t ' style='font-size:11px;color:#000;letter-spacing:0.675px;left:316.80px;top:396.84px;'>2</div><div class='t ' style='font-size:11px;color:#000;letter-spacing:0.328px;left:396.80px;top:396.84px;'>T2</div><div class='btn' style='left:71px;top:620px;width:289px;height:21px'></div><div class='t ' style='font-size:11px;color:#000;letter-spacing:0.134px;left:137.80px;top:625.74px;'>Обнови от текущия клипборд</div><div class='btn' style='left:692px;top:644px;width:127px;height:21px;border:2px solid #0078d7'></div><div class='t ' style='font-size:11px;color:#000;letter-spacing:0.188px;left:734.70px;top:649.74px;'>Въведи</div><div class='btn' style='left:836px;top:644px;width:73px;height:21px'></div><div class='t ' style='font-size:11px;color:#000;letter-spacing:0.447px;left:849.30px;top:649.74px;'>Затвори</div></body></html>
